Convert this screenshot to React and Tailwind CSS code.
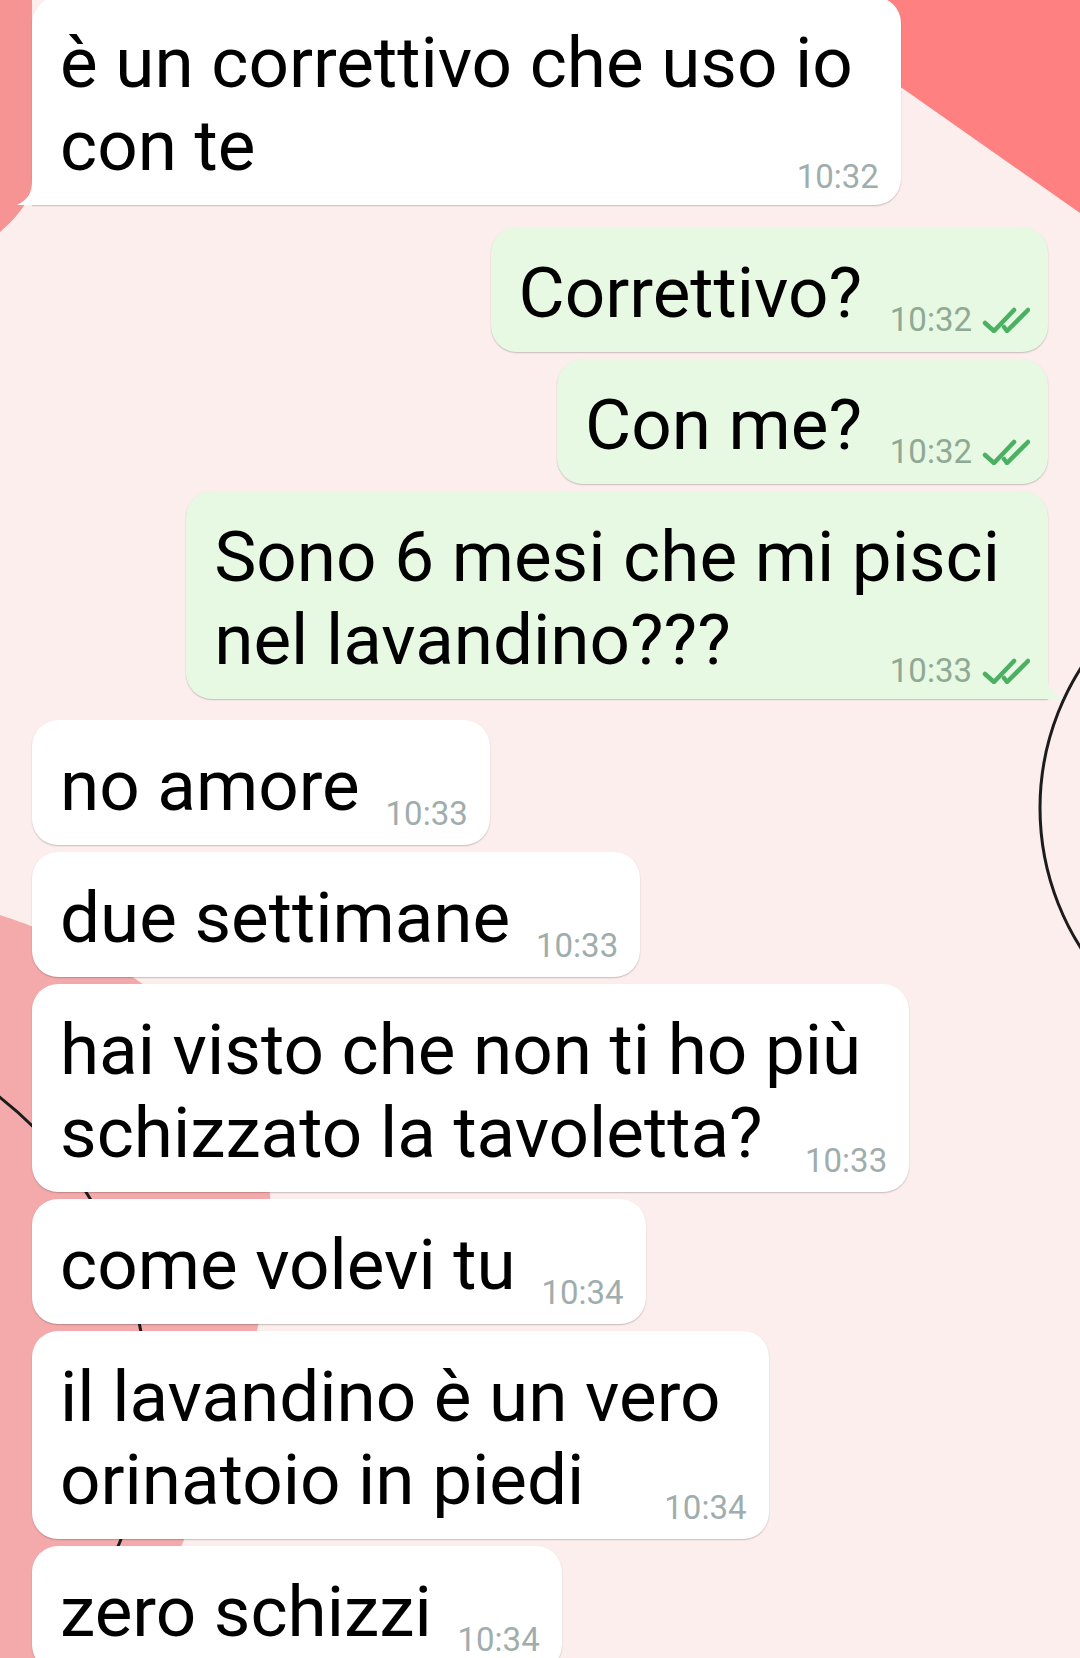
import React from 'react';

const messages = [
  { lines: ['è un correttivo che uso io', 'con te'], time: '10:32', tail: true, gap: 'mt-[-3px]' },
  { out: true, lines: ['Correttivo?'], time: '10:32', gap: 'mt-[22px]' },
  { out: true, lines: ['Con me?'], time: '10:32', gap: 'mt-[7px]' },
  { out: true, lines: ['Sono 6 mesi che mi pisci', 'nel lavandino???'], time: '10:33', tail: true, gap: 'mt-[7px]' },
  { lines: ['no amore'], time: '10:33', gap: 'mt-[21px]' },
  { lines: ['due settimane'], time: '10:33', gap: 'mt-[7px]' },
  { lines: ['hai visto che non ti ho più', 'schizzato la tavoletta?'], time: '10:33', gap: 'mt-[7px]' },
  { lines: ['come volevi tu'], time: '10:34', gap: 'mt-[7px]' },
  { lines: ['il lavandino è un vero', 'orinatoio in piedi'], time: '10:34', gap: 'mt-[7px]' },
  { lines: ['zero schizzi'], time: '10:34', gap: 'mt-[7px]' },
];

// wallpaper: blobs + thin black rings
const Wallpaper = () => (
  <svg className="absolute inset-0" width="1080" height="1658" viewBox="0 0 1080 1658">
    <path d="M0 0H32V180C32 200 18 216 0 232Z" fill="#f69494" />
    <path d="M830 0H1080V213L912 95L830 38Z" fill="#fe8080" />
    <path d="M0 915C60 935 250 1000 270 1195C280 1300 230 1450 130 1658H0Z" fill="#f4aaaa" />
    <circle cx="-238" cy="1400" r="385" fill="none" stroke="#1c1c1c" strokeWidth="3" />
    <circle cx="1300" cy="808" r="260" fill="none" stroke="#1c1c1c" strokeWidth="3" />
  </svg>
);

const Checks = () => (
  <svg width="48" height="26" viewBox="0 0 48 26" fill="none" stroke="#4cb063" strokeWidth="4.5" strokeLinecap="round" strokeLinejoin="round">
    <path d="M3 16l9 8L32 3" />
    <path d="M22 20l3 4L46 3" />
  </svg>
);

const Bubble = ({ msg }) => {
  const { out, lines, time, tail, gap } = msg;
  const single = lines.length === 1;
  const pad = single ? (out ? 'pr-[186px]' : 'pr-[130px]') : 'pr-[48px]';
  const shape = tail
    ? (out ? 'rounded-[26px] rounded-br-none' : 'rounded-[26px] rounded-bl-none')
    : 'rounded-[26px]';
  const timeBottom = tail ? 'bottom-[12px]' : out ? 'bottom-[16px]' : 'bottom-[15px]';

  return (
    <div
      className={`relative ${gap} ${out ? 'self-end bg-[#e7f8e3]' : 'self-start bg-white'} ${shape} ${pad} pl-[28px] pt-[24px] pb-[18px] shadow-[0_1px_1.5px_rgba(0,0,0,0.22)]`}
    >
      {lines.map((l) => (
        <div key={l} className="whitespace-nowrap text-[71px] leading-[83px] text-black">
          {l}
        </div>
      ))}

      <div className={`absolute flex items-center gap-[10px] ${timeBottom} ${out ? 'right-[18px]' : 'right-[22px]'}`}>
        <span className={`text-[33px] leading-[32px] ${out ? 'text-[#8fa995]' : 'text-[#a0adad]'}`}>{time}</span>
        {out && <Checks />}
      </div>

      {tail && !out && (
        <svg className="absolute bottom-0 left-[-15px]" width="16" height="24" viewBox="0 0 16 24">
          <path d="M16 0C16 12 9 20 0 24H16Z" fill="#ffffff" />
        </svg>
      )}
      {tail && out && (
        <svg className="absolute bottom-0 right-[-15px]" width="16" height="24" viewBox="0 0 16 24">
          <path d="M0 0C0 12 7 20 16 24H0Z" fill="#e7f8e3" />
        </svg>
      )}
    </div>
  );
};

const App = () => (
  <div className="relative h-[1658px] w-[1080px] overflow-hidden bg-[#fdeeee] font-['Roboto',sans-serif]">
    <Wallpaper />
    <div className="relative flex flex-col px-[32px]">
      {messages.map((m, i) => (
        <Bubble key={i} msg={m} />
      ))}
    </div>
  </div>
);

export default App;
